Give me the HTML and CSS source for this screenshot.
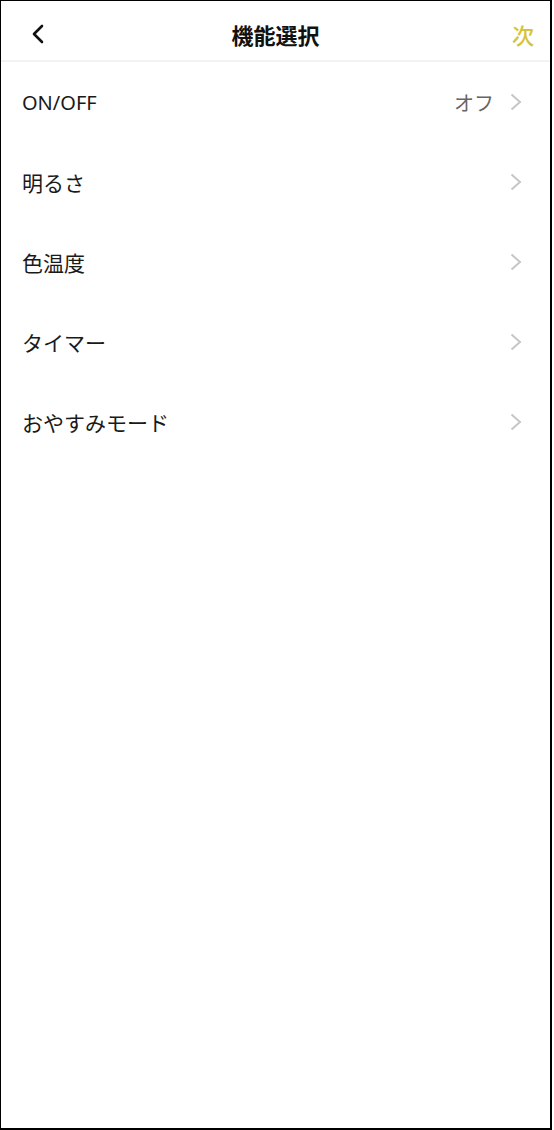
FILE: index.html
```html
<!DOCTYPE html>
<html lang="ja">
<head>
    <meta charset="UTF-8">
    <meta name="viewport" content="width=device-width, initial-scale=1.0">
    <title>機能選択</title>
    <link rel="stylesheet" href="styles.css">
</head>
<body>
    <div class="screen">
        <header class="topbar">
            <div class="topbar-left">
                <svg class="back" width="14" height="20" viewBox="0 0 14 20">
                    <polyline points="11,2 3,10 11,18" fill="none" stroke="#111" stroke-width="2.6" stroke-linecap="round" stroke-linejoin="round"/>
                </svg>
            </div>
            <h1 class="title">機能選択</h1>
            <div class="topbar-right">
                <span class="next">次</span>
            </div>
        </header>

        <ul class="menu">
            <li class="menu-item">
                <span class="label label-latin">ON/OFF</span>
                <span class="value">オフ</span>
                <svg class="arrow" width="12" height="18" viewBox="0 0 12 18">
                    <polyline points="1.5,1.5 10,9 1.5,16.5" fill="none" stroke="#c6c6c6" stroke-width="2"/>
                </svg>
            </li>
            <li class="menu-item">
                <span class="label">明るさ</span>
                <svg class="arrow" width="12" height="18" viewBox="0 0 12 18">
                    <polyline points="1.5,1.5 10,9 1.5,16.5" fill="none" stroke="#c6c6c6" stroke-width="2"/>
                </svg>
            </li>
            <li class="menu-item">
                <span class="label">色温度</span>
                <svg class="arrow" width="12" height="18" viewBox="0 0 12 18">
                    <polyline points="1.5,1.5 10,9 1.5,16.5" fill="none" stroke="#c6c6c6" stroke-width="2"/>
                </svg>
            </li>
            <li class="menu-item">
                <span class="label">タイマー</span>
                <svg class="arrow" width="12" height="18" viewBox="0 0 12 18">
                    <polyline points="1.5,1.5 10,9 1.5,16.5" fill="none" stroke="#c6c6c6" stroke-width="2"/>
                </svg>
            </li>
            <li class="menu-item">
                <span class="label">おやすみモード</span>
                <svg class="arrow" width="12" height="18" viewBox="0 0 12 18">
                    <polyline points="1.5,1.5 10,9 1.5,16.5" fill="none" stroke="#c6c6c6" stroke-width="2"/>
                </svg>
            </li>
        </ul>
    </div>
</body>
</html>
```

FILE: styles.css
```css
body {
    margin: 0;
    background-color: #fff;
    font-family: "Noto Sans", "Noto Sans CJK JP", sans-serif;
    color: #1a1a1a;
}

.screen {
    width: 552px;
    height: 1130px;
    box-sizing: border-box;
    border-style: solid;
    border-color: #000;
    border-width: 1px 2px 2px 1px;
    background-color: #fff;
}

.topbar {
    display: grid;
    grid-template-columns: 1fr auto 1fr;
    align-items: center;
    height: 61px;
    box-sizing: border-box;
    padding: 7px 16px 0 16px;
    border-bottom: 2px solid #f3f3f3;
}

.topbar-left {
    display: flex;
    align-items: center;
}

.back {
    display: block;
    margin-left: 14px;
}

.title {
    margin: 0;
    font-size: 22px;
    font-weight: bold;
    color: #111;
    font-family: "Noto Sans CJK JP", sans-serif;
}

.topbar-right {
    display: flex;
    justify-content: flex-end;
}

.next {
    font-size: 22px;
    font-weight: 500;
    color: #d5c43a;
    font-family: "Noto Sans CJK JP", sans-serif;
}

.menu {
    list-style: none;
    margin: 0;
    padding: 0;
}

.menu-item {
    display: flex;
    align-items: center;
    height: 80px;
    padding: 0 28px 0 21px;
}

.label {
    flex: 1;
    font-size: 21px;
    color: #1a1a1a;
}

.label-latin {
    font-size: 20px;
}

.value {
    font-size: 20px;
    color: #666;
    margin-right: 16px;
}

.arrow {
    display: block;
}
```
